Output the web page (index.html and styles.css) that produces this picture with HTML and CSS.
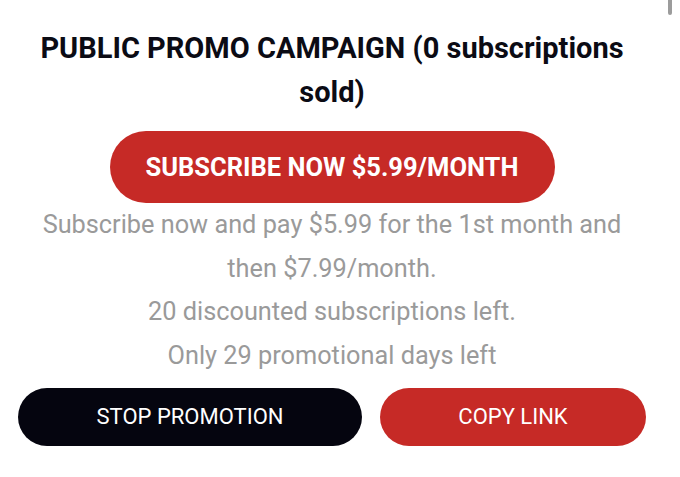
FILE: index.html
```html
<!DOCTYPE html>
<html>
<head>
<meta charset="utf-8">
<link rel="stylesheet" href="styles.css">
</head>
<body>
<div class="scrollbar"></div>
<main class="panel">
  <h1 class="title">PUBLIC PROMO CAMPAIGN (0 subscriptions sold)</h1>
  <button class="btn btn-subscribe">SUBSCRIBE NOW $5.99/MONTH</button>
  <div class="info">
    <p>Subscribe now and pay $5.99 for the 1st month and then $7.99/month.</p>
    <p>20 discounted subscriptions left.</p>
    <p>Only 29 promotional days left</p>
  </div>
  <div class="actions">
    <button class="btn btn-stop">STOP PROMOTION</button>
    <button class="btn btn-copy">COPY LINK</button>
  </div>
</main>
</body>
</html>
```
FILE: styles.css
```css
html, body {
  margin: 0;
  padding: 0;
  background: #ffffff;
}
body {
  width: 680px;
  height: 477px;
  overflow: hidden;
  font-family: Roboto, "Liberation Sans", sans-serif;
}
.scrollbar {
  position: absolute;
  left: 668px;
  top: 0;
  width: 4px;
  height: 15px;
  border-radius: 0 0 2px 2px;
  background: #9c9c9c;
}
.panel {
  width: 628px;
  display: flex;
  flex-direction: column;
  align-items: center;
  padding: 26px 34px 0 18px;
}
.title {
  margin: 0;
  width: 600px;
  text-align: center;
  font-size: 29px;
  font-weight: 700;
  line-height: 44px;
  color: #0b0b14;
}
.btn {
  border: none;
  font-family: Roboto, "Liberation Sans", sans-serif;
  color: #ffffff;
  border-radius: 999px;
  padding: 0;
}
.btn-subscribe {
  margin-top: 17px;
  width: 445px;
  height: 72px;
  background: #c62a26;
  font-size: 25.5px;
  font-weight: 700;
}
.info {
  margin-top: 0;
  text-align: center;
  color: #9a9a9a;
  font-size: 25.3px;
  line-height: 43.5px;
  width: 600px;
}
.info p {
  margin: 0;
}
.actions {
  align-self: stretch;
  display: flex;
  justify-content: space-between;
  margin-top: 10.5px;
}
.btn-stop {
  width: 344px;
  height: 58px;
  background: #05050f;
  font-size: 22px;
}
.btn-copy {
  width: 266px;
  height: 58px;
  background: #c62a26;
  font-size: 22px;
}
```
